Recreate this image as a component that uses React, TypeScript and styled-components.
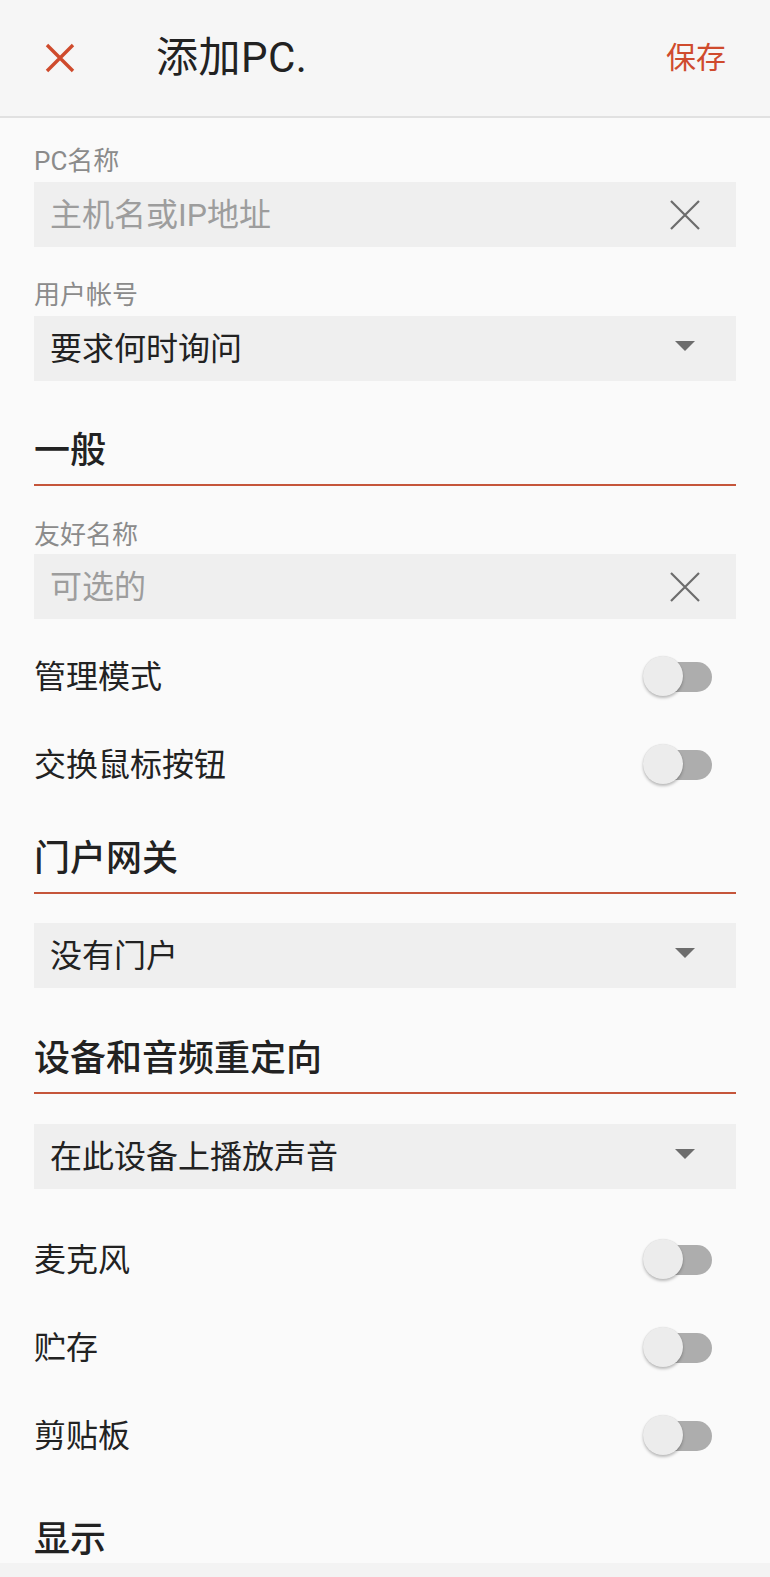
import React from 'react';
import styled, { createGlobalStyle } from 'styled-components';

const ACCENT = '#cf4b2d';
const RULE = '#c5553a';

const GlobalStyle = createGlobalStyle`
  html, body {
    margin: 0;
    padding: 0;
    background: #fafafa;
  }
  body {
    font-family: Roboto, "Noto Sans CJK SC", sans-serif;
    overflow: hidden;
  }
  * { box-sizing: border-box; }
`;

const Screen = styled.div`
  position: relative;
  width: 770px;
  height: 1577px;
  overflow: hidden;
  background: #fafafa;
  display: flex;
  flex-direction: column;
`;

const Header = styled.header`
  height: 118px;
  flex-shrink: 0;
  display: flex;
  align-items: center;
  padding: 0 44px 0 45px;
  background: #f6f6f6;
  border-bottom: 2px solid #e1e1e1;
`;

const IconButton = styled.button`
  width: 30px;
  height: 30px;
  padding: 0;
  border: 0;
  background: transparent;
  display: flex;
  align-items: center;
  justify-content: center;
  flex-shrink: 0;
`;

const Title = styled.h1`
  flex: 1;
  margin: 0 0 0 81px;
  font-size: 42px;
  font-weight: 400;
  line-height: 50px;
  letter-spacing: 0.5px;
  color: #222;
`;

const SaveAction = styled.button`
  border: 0;
  padding: 0;
  background: transparent;
  font-family: inherit;
  font-size: 30px;
  line-height: 40px;
  color: ${ACCENT};
`;

const Content = styled.main`
  display: flex;
  flex-direction: column;
  padding: 28px 34px 0;
`;

const FieldLabel = styled.div<{ $top?: number }>`
  margin-top: ${(p) => p.$top ?? 0}px;
  font-size: 26px;
  line-height: 30px;
  color: #8b8b8b;
`;

const Field = styled.div<{ $top?: number }>`
  margin-top: ${(p) => p.$top ?? 0}px;
  height: 65px;
  display: flex;
  align-items: center;
  padding: 0 36px 0 16px;
  background: #efefef;
`;

const FieldText = styled.span<{ $placeholder?: boolean }>`
  flex: 1;
  font-size: 32px;
  line-height: 40px;
  color: ${(p) => (p.$placeholder ? '#9d9d9d' : '#222')};
`;

const FieldIcon = styled.span`
  width: 30px;
  height: 30px;
  display: flex;
  align-items: center;
  justify-content: center;
  flex-shrink: 0;
`;

const Caret = styled.span`
  width: 0;
  height: 0;
  margin-top: -6px;
  border-left: 10.5px solid transparent;
  border-right: 10.5px solid transparent;
  border-top: 10px solid #6d6d6d;
`;

const SectionHeading = styled.h2<{ $top?: number }>`
  margin: ${(p) => p.$top ?? 0}px 0 0;
  padding-bottom: 11px;
  font-size: 36px;
  font-weight: 500;
  line-height: 44px;
  color: #222;
  border-bottom: 2px solid ${RULE};
`;

const ToggleRow = styled.div<{ $top?: number }>`
  margin-top: ${(p) => p.$top ?? 0}px;
  height: 88px;
  display: flex;
  align-items: center;
  justify-content: space-between;
  padding-right: 24px;
`;

const RowLabel = styled.span`
  font-size: 32px;
  line-height: 40px;
  color: #222;
`;

const Switch = styled.span`
  position: relative;
  width: 70px;
  height: 42px;
  flex-shrink: 0;
`;

const SwitchTrack = styled.span`
  position: absolute;
  right: 0;
  top: 6px;
  width: 62px;
  height: 30px;
  border-radius: 15px;
  background: #adadad;
`;

const SwitchThumb = styled.span`
  position: absolute;
  left: 1px;
  top: 0;
  width: 40px;
  height: 40px;
  border-radius: 50%;
  background: #ececec;
  box-shadow: 0 2px 3px rgba(0, 0, 0, 0.25), 0 0 1px rgba(0, 0, 0, 0.12);
`;

const BottomEdge = styled.div`
  position: absolute;
  left: 0;
  right: 0;
  bottom: 0;
  height: 14px;
  background: #f3f3f3;
`;

const CloseIcon = () => (
  <svg width="30" height="30" viewBox="0 0 30 30">
    <path d="M2 2 L28 28 M28 2 L2 28" stroke={ACCENT} strokeWidth="3.4" fill="none" />
  </svg>
);

const ClearIcon = () => (
  <svg width="30" height="30" viewBox="0 0 30 30">
    <path d="M1 1 L29 29 M29 1 L1 29" stroke="#6c6c6c" strokeWidth="2.2" fill="none" />
  </svg>
);

const TextField = ({ value, top }: { value: string; top?: number }) => (
  <Field $top={top}>
    <FieldText $placeholder>{value}</FieldText>
    <FieldIcon>
      <ClearIcon />
    </FieldIcon>
  </Field>
);

const SelectField = ({ value, top }: { value: string; top?: number }) => (
  <Field $top={top}>
    <FieldText>{value}</FieldText>
    <FieldIcon>
      <Caret />
    </FieldIcon>
  </Field>
);

const Toggle = ({ label, top }: { label: string; top?: number }) => (
  <ToggleRow $top={top}>
    <RowLabel>{label}</RowLabel>
    <Switch>
      <SwitchTrack />
      <SwitchThumb />
    </Switch>
  </ToggleRow>
);

export default function App() {
  return (
    <>
      <GlobalStyle />
      <Screen>
        <Header>
          <IconButton aria-label="关闭">
            <CloseIcon />
          </IconButton>
          <Title>添加PC.</Title>
          <SaveAction>保存</SaveAction>
        </Header>
        <Content>
          <FieldLabel>PC名称</FieldLabel>
          <TextField value="主机名或IP地址" top={6} />
          <FieldLabel $top={33}>用户帐号</FieldLabel>
          <SelectField value="要求何时询问" top={6} />

          <SectionHeading $top={48}>一般</SectionHeading>
          <FieldLabel $top={34}>友好名称</FieldLabel>
          <TextField value="可选的" top={4} />
          <Toggle label="管理模式" top={14} />
          <Toggle label="交换鼠标按钮" />

          <SectionHeading $top={28}>门户网关</SectionHeading>
          <SelectField value="没有门户" top={29} />

          <SectionHeading $top={49}>设备和音频重定向</SectionHeading>
          <SelectField value="在此设备上播放声音" top={30} />
          <Toggle label="麦克风" top={27} />
          <Toggle label="贮存" />
          <Toggle label="剪贴板" />

          <SectionHeading $top={38}>显示</SectionHeading>
        </Content>
        <BottomEdge />
      </Screen>
    </>
  );
}
